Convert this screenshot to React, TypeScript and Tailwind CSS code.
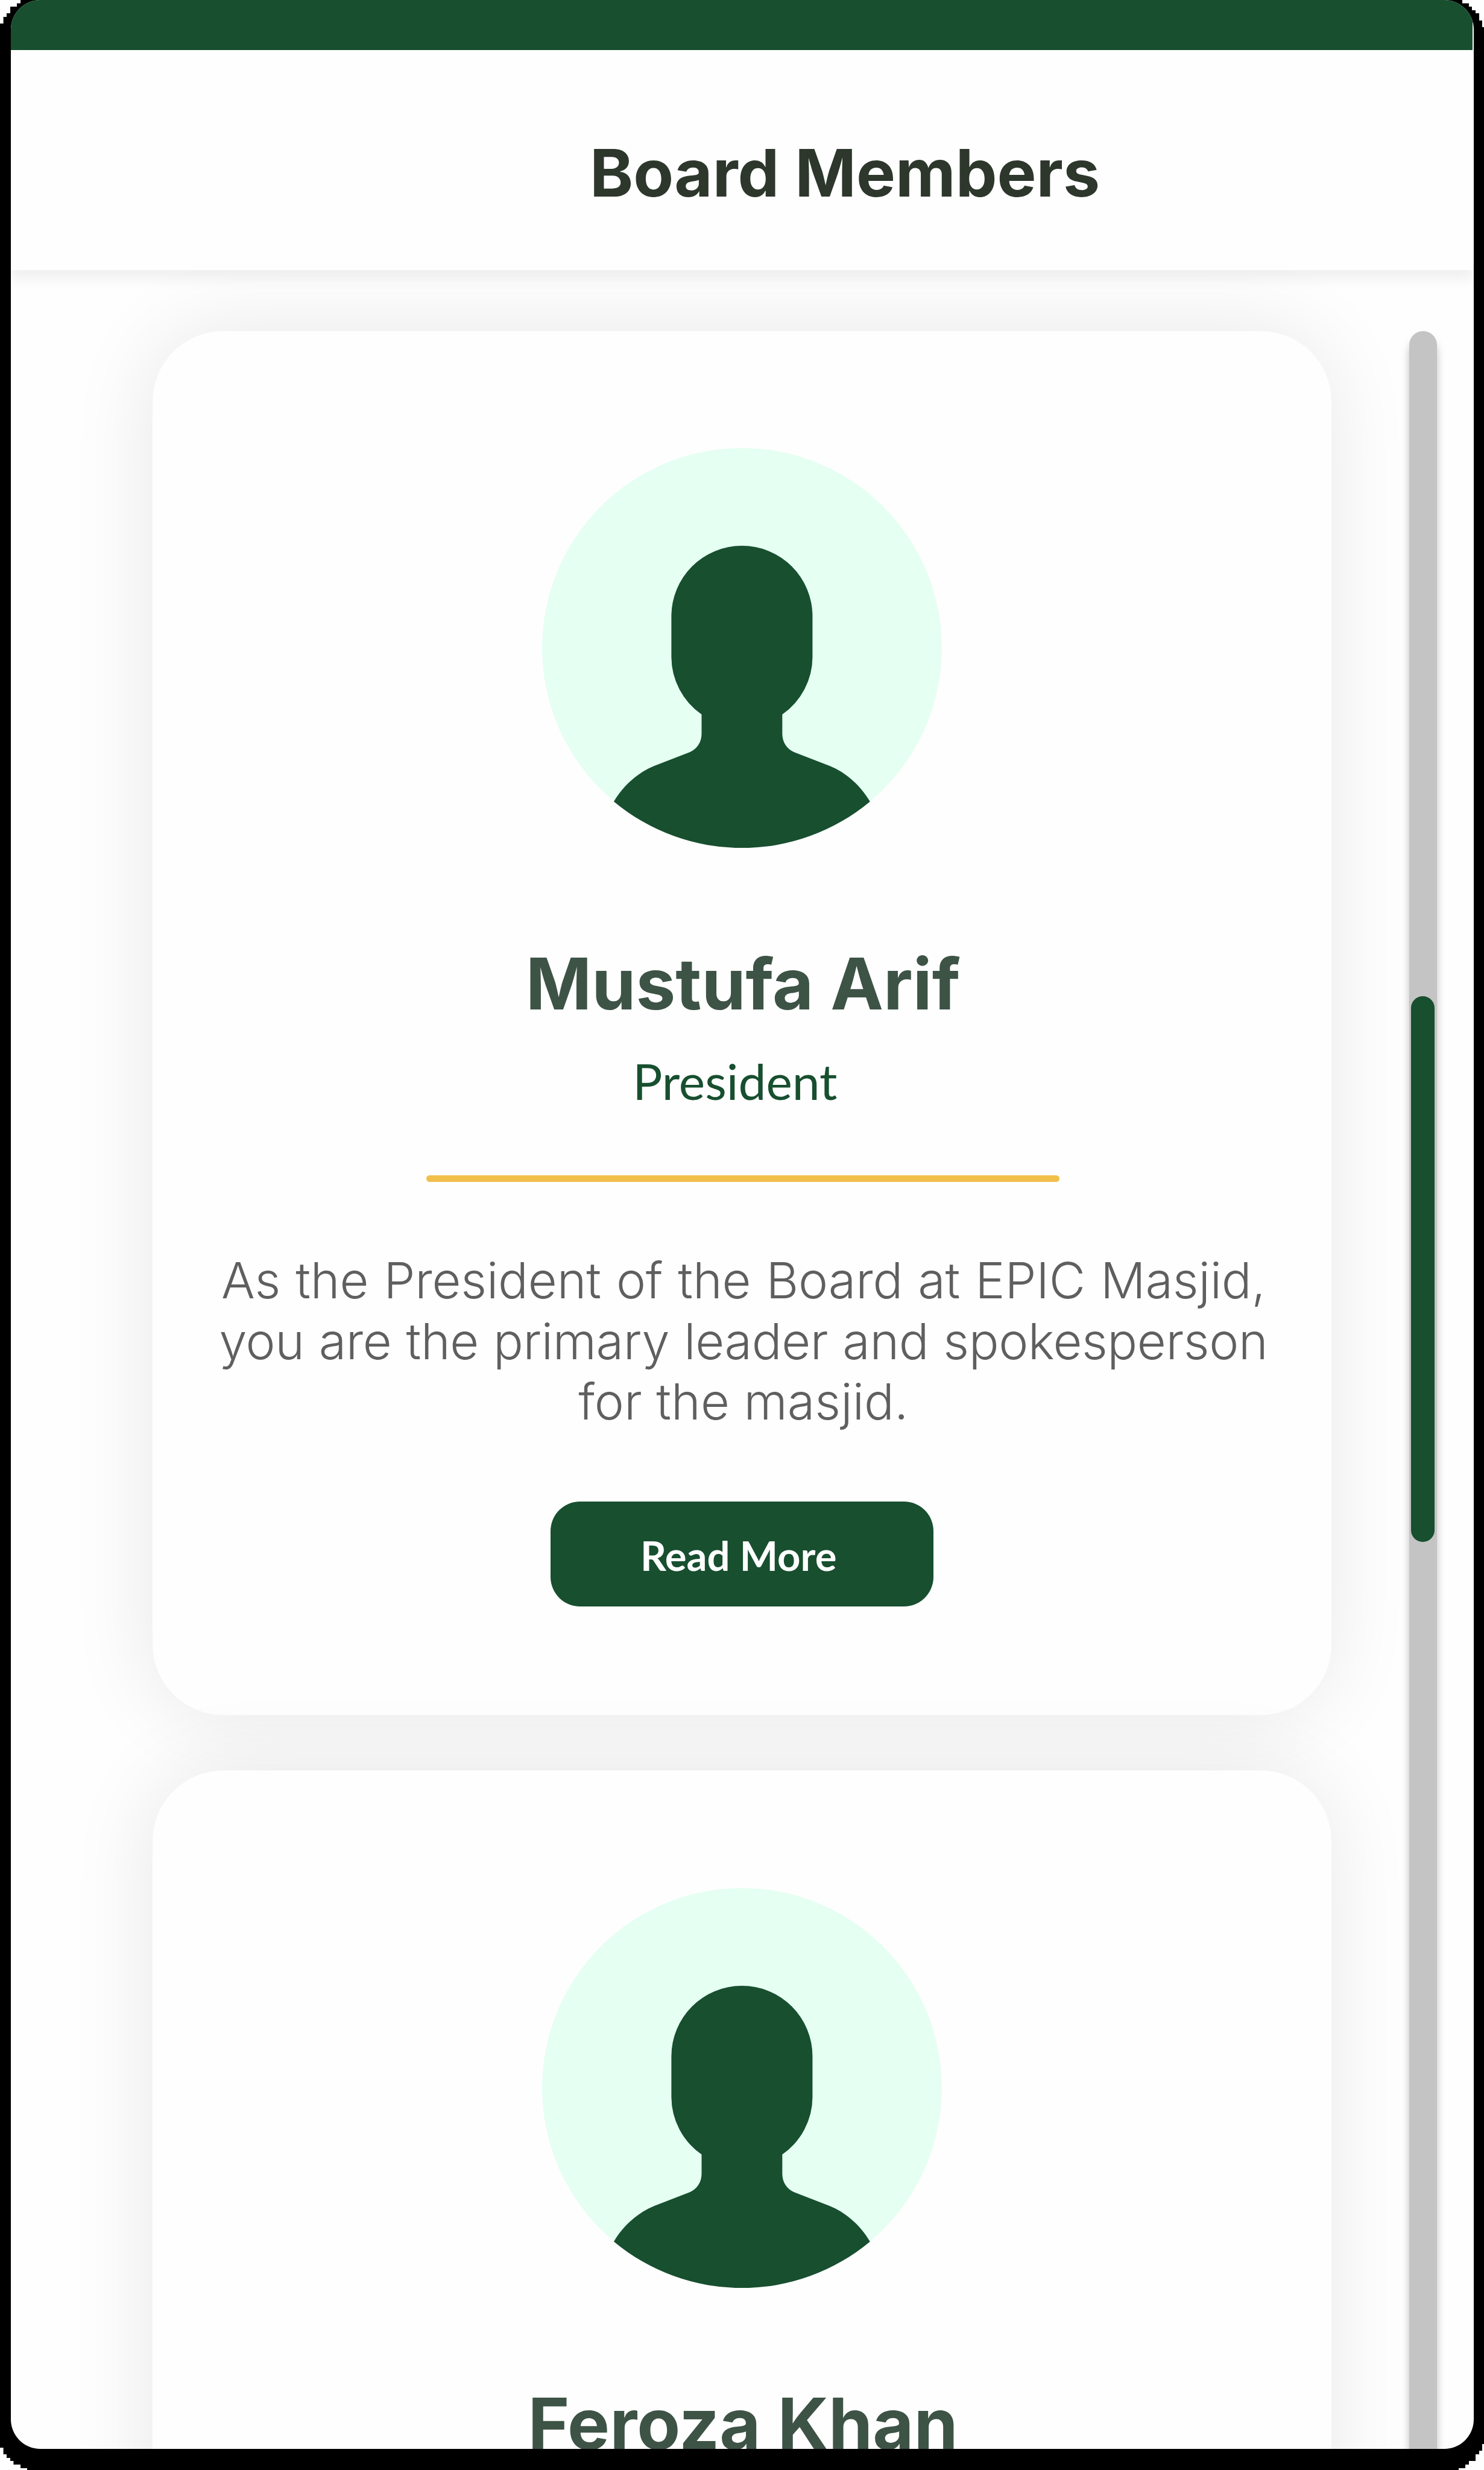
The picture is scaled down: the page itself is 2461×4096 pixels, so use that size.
type Line = { text: string; tracking: string };
type Member = { name: string; role: string; bio: Line[] };

const members: Member[] = [
  {
    name: "Mustufa Arif",
    role: "President",
    bio: [
      { text: "As the President of the Board at EPIC Masjid,", tracking: "tracking-[-0.15px] [word-spacing:2px]" },
      { text: "you are the primary leader and spokesperson", tracking: "tracking-[-0.37px] [word-spacing:1.2px]" },
      { text: "for the masjid.", tracking: "tracking-[0.1px]" },
    ],
  },
  { name: "Feroza Khan", role: "", bio: [] },
];

function Avatar() {
  return (
    <svg viewBox="0 0 947 947" className="h-[662.8px] w-[662.8px] shrink-0" aria-hidden="true">
      <circle cx="473.5" cy="473.5" r="473.5" fill="#e5fff2" />
      <path
        d="M473.5 231.5A167 167 0 0 1 640.7 398.5V495A167 167 0 0 1 569.1 631.3V677C569.1 697 580 713 597 720.5L680 752.6C719.5 768 754 799 777 837.5A473.5 473.5 0 0 1 170 837.5C193 799 228 768 267 752.6L350 720.5C367 713 377.9 697 377.9 677V631.3A167 167 0 0 1 306.3 495V398.5A167 167 0 0 1 473.5 231.5Z"
        fill="#174f2f"
      />
    </svg>
  );
}

function MemberCard({ member }: { member: Member }) {
  return (
    <article className="flex h-[2295.4px] w-[1954.4px] shrink-0 flex-col items-center rounded-[117px] bg-[#fefefe] pt-[194.8px] shadow-[-3px_0_140px_rgba(0,0,0,0.09)]">
      <Avatar />
      <h2 className="mt-[153px] pl-[3px] font-['Inter',sans-serif] text-[117.6px] leading-[144px] font-bold whitespace-nowrap text-[#3d5346]">
        {member.name}
      </h2>
      {member.role && (
        <>
          <p className="mt-[38.5px] pr-[23.6px] font-['Lato',sans-serif] text-[82.1px] leading-[100px] text-[#174f2f]">
            {member.role}
          </p>
          <div className="mt-[106.8px] ml-[2px] h-[11.8px] w-[1050px] rounded-full bg-[#f1c04c]" />
          <p className="mt-[112.8px] pl-[4.6px] text-center font-['Inter',sans-serif] text-[82.8px] leading-[100.6px] font-light text-[#5f5f5f]">
            {member.bio.map((line) => (
              <span key={line.text} className={`block whitespace-nowrap ${line.tracking}`}>
                {line.text}
              </span>
            ))}
          </p>
          <button className="mt-[114.8px] flex h-[173.8px] w-[635px] items-center justify-center rounded-[49px] bg-[#174f2f] pt-[6px] pr-[11.8px] font-['Lato',sans-serif] text-[67px] font-bold text-[#fefefe]">
            Read More
          </button>
        </>
      )}
    </article>
  );
}

function Scrollbar() {
  return (
    <div className="ml-[129px] flex h-[3700px] w-[46px] shrink-0 flex-col items-center rounded-full bg-[#c4c4c4] pt-[1103px] shadow-[0_14px_14px_rgba(0,0,0,0.25)]">
      <div className="h-[905.4px] w-[39.2px] rounded-full bg-[#174f2f]" />
    </div>
  );
}

export default function App() {
  return (
    <div className="h-[4096px] w-[2461px] overflow-hidden bg-[#fefefe]">
      {/* Device frame with stepped outer corners */}
      <div className="h-full w-full bg-black px-[17.5px] pb-[35px] [clip-path:polygon(34px_0,34px_5.6px,28px_5.6px,28px_11px,17px_11px,17px_22px,11px_22px,11px_28px,5.6px_28px,5.6px_39px,0_39px,0_4059px,5.6px_4059px,5.6px_4070px,11px_4070px,11px_4076px,17px_4076px,17px_4081px,22.4px_4081px,22.4px_4087px,34px_4087px,34px_4093px,45px_4093px,45px_4096px,2419px_4096px,2419px_4093px,2430px_4093px,2430px_4087px,2436px_4087px,2436px_4081px,2447px_4081px,2447px_4070px,2453px_4070px,2453px_4064px,2458px_4064px,2458px_4053px,2461px_4053px,2461px_45px,2458px_45px,2458px_34px,2453px_34px,2453px_22px,2447px_22px,2447px_17px,2441px_17px,2441px_11px,2436px_11px,2436px_5.6px,2425px_5.6px,2425px_0)]">
        <div className="flex h-full flex-col overflow-hidden rounded-[49px] bg-[#fefefe]">
          <div className="mr-[1.6px] h-[82.6px] shrink-0 bg-[#174f2f]" />
          <header className="relative z-10 h-[365.3px] shrink-0 bg-[#fefefe] pt-[138.3px] pl-[960.6px] shadow-[0_15px_20px_rgba(0,0,0,0.06)]">
            <h1 className="font-['Inter',sans-serif] text-[109.2px] leading-[130px] font-bold whitespace-nowrap text-[#2d372c]">
              Board Members
            </h1>
          </header>
          <main className="flex min-h-0 flex-1 items-start pt-[100.8px] pl-[235.9px]">
            <div className="flex flex-col gap-[92.3px]">
              {members.map((m) => (
                <MemberCard key={m.name} member={m} />
              ))}
            </div>
            <Scrollbar />
          </main>
        </div>
      </div>
    </div>
  );
}
